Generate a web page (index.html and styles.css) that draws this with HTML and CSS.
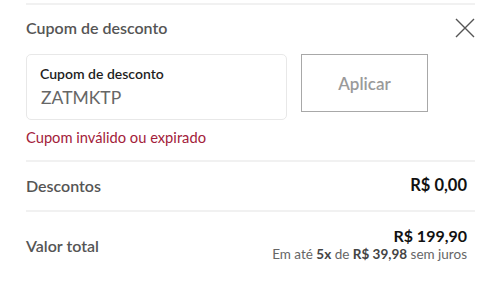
FILE: index.html
```html
<!DOCTYPE html>
<html lang="pt-BR">
<head>
<meta charset="utf-8">
<title>Cupom de desconto</title>
<link rel="stylesheet" href="styles.css">
</head>
<body>
<div class="panel">
  <div class="topline"></div>
  <div class="header">
    <h2 class="title">Cupom de desconto</h2>
    <button class="close" aria-label="Fechar">
      <svg width="20" height="20" viewBox="0 0 20 20"><path d="M1 1 L19 19 M19 1 L1 19" stroke="#555" stroke-width="1.4" fill="none"/></svg>
    </button>
  </div>
  <div class="coupon">
    <div class="field">
      <span class="field-label">Cupom de desconto</span>
      <span class="field-value">ZATMKTP</span>
    </div>
    <button class="apply">Aplicar</button>
  </div>
  <p class="error">Cupom inválido ou expirado</p>
  <div class="row discount">
    <span class="row-label">Descontos</span>
    <span class="row-value">R$ 0,00</span>
  </div>
  <div class="row total">
    <span class="row-label">Valor total</span>
    <div class="total-values">
      <span class="row-value">R$ 199,90</span>
      <span class="installments">Em até <b>5x</b> de <b>R$ 39,98</b> sem juros</span>
    </div>
  </div>
</div>
</body>
</html>
```

FILE: styles.css
```css
* { box-sizing: border-box; }
html, body { margin: 0; padding: 0; background: #fff; }
body { font-family: Lato, "Open Sans", sans-serif; color: #222; }

.panel { padding: 0 25px 0 26px; }

.topline { height: 2px; margin-top: 3px; background: #f1f1f1; }

.header {
  height: 45px;
  display: flex;
  align-items: center;
  justify-content: space-between;
}
.title {
  margin: 0;
  font-size: 16px;
  font-weight: 600;
  color: #555;
  line-height: 20px;
}
.close {
  border: 0; background: none; padding: 0; margin-right: 0;
  width: 20px; height: 20px; display: flex;
}

.coupon { display: flex; gap: 14px; margin-top: 4px; align-items: flex-start; }
.field {
  width: 261px; height: 66px;
  border: 1px solid #e8e8e8; border-radius: 5px;
  padding: 10px 13px;
  display: flex; flex-direction: column;
}
.field-label { font-size: 14px; font-weight: 600; color: #1e1e1e; line-height: 18px; }
.field-value { font-size: 17.5px; color: #666; line-height: 24px; margin-top: 3px; padding-left: 1px; }

.apply {
  width: 127px; height: 58px;
  border: 1.5px solid #a8a8a8; background: #fff;
  font-family: inherit; font-size: 17px; font-weight: 600; color: #9a9a9a;
}

.error { margin: 7px 0 0; font-size: 14.7px; line-height: 20px; color: #a3213a; }

.row {
  display: flex; justify-content: space-between; align-items: center;
  border-top: 2px solid #f1f1f1;
  padding-right: 8px;
}
.discount { margin-top: 13px; height: 50px; padding-bottom: 2px; }
.total { height: 68px; }
.row-label { font-size: 16px; font-weight: 600; color: #555; }
.row-value { font-size: 16.5px; font-weight: 700; color: #111; }
.total .row-value { font-size: 16px; }
.total-values { display: flex; flex-direction: column; align-items: flex-end; margin-top: -2px; }
.installments { font-size: 13.5px; color: #666; margin-top: 1px; }
.installments b { color: #444; font-weight: 700; }
```
